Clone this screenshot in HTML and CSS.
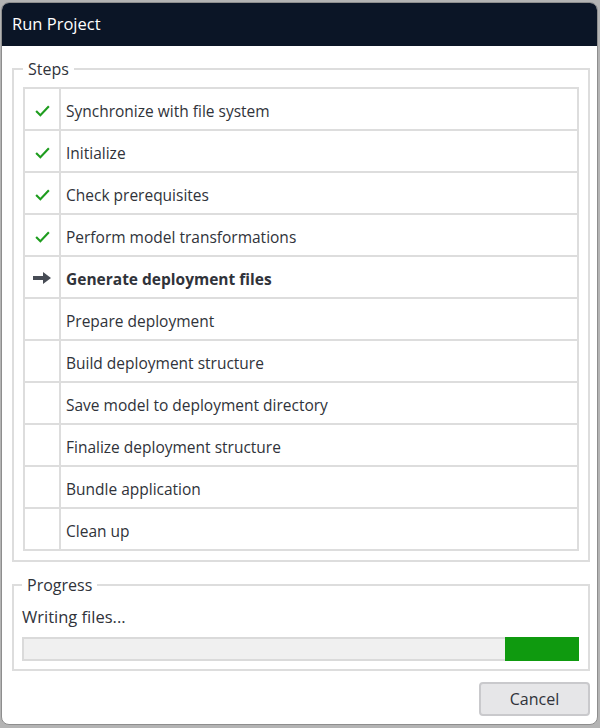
FILE: index.html
```html
<!DOCTYPE html>
<html>
<head>
<meta charset="utf-8">
<link rel="stylesheet" href="styles.css">
</head>
<body>
<div class="window">
  <div class="titlebar">Run Project</div>
  <div class="content">
    <fieldset class="group steps">
      <legend>Steps</legend>
      <table class="steps-table">
        <tr class="done"><td class="icon"><svg viewBox="0 0 16 16" width="17" height="17"><path d="M2 8.5 L6 12.5 L14 4" fill="none" stroke="#1f9d1f" stroke-width="2"/></svg></td><td>Synchronize with file system</td></tr>
        <tr class="done"><td class="icon"><svg viewBox="0 0 16 16" width="17" height="17"><path d="M2 8.5 L6 12.5 L14 4" fill="none" stroke="#1f9d1f" stroke-width="2"/></svg></td><td>Initialize</td></tr>
        <tr class="done"><td class="icon"><svg viewBox="0 0 16 16" width="17" height="17"><path d="M2 8.5 L6 12.5 L14 4" fill="none" stroke="#1f9d1f" stroke-width="2"/></svg></td><td>Check prerequisites</td></tr>
        <tr class="done"><td class="icon"><svg viewBox="0 0 16 16" width="17" height="17"><path d="M2 8.5 L6 12.5 L14 4" fill="none" stroke="#1f9d1f" stroke-width="2"/></svg></td><td>Perform model transformations</td></tr>
        <tr class="current"><td class="icon"><svg viewBox="0 0 20 16" width="20" height="16"><path d="M1 6 H11 V2 L19 8 L11 14 V10 H1 Z" fill="#474c55"/></svg></td><td>Generate deployment files</td></tr>
        <tr><td class="icon"></td><td>Prepare deployment</td></tr>
        <tr><td class="icon"></td><td>Build deployment structure</td></tr>
        <tr><td class="icon"></td><td>Save model to deployment directory</td></tr>
        <tr><td class="icon"></td><td>Finalize deployment structure</td></tr>
        <tr><td class="icon"></td><td>Bundle application</td></tr>
        <tr><td class="icon"></td><td>Clean up</td></tr>
      </table>
    </fieldset>
    <fieldset class="group progress">
      <legend>Progress</legend>
      <div class="status">Writing files...</div>
      <div class="bar"><div class="fill"></div></div>
    </fieldset>
    <div class="actions"><button class="btn">Cancel</button></div>
  </div>
</div>
</body>
</html>
```
FILE: styles.css
```css
html, body {
  margin: 0;
  padding: 0;
  background: #b4b4b4;
}
body {
  padding: 2px 2px 3px 1px;
  font-family: "Open Sans", "Noto Sans", sans-serif;
  font-size: 15.5px;
  color: #30333a;
}
.window {
  box-sizing: border-box;
  height: 723px;
  background: #ffffff;
  border: 1px solid #8e8e8e;
  border-radius: 8px;
  overflow: hidden;
  display: flex;
  flex-direction: column;
}
.titlebar {
  background: #0b1526;
  color: #ffffff;
  height: 43px;
  line-height: 42px;
  padding-left: 10px;
  font-size: 16.5px;
}
.content {
  flex: 1;
  display: flex;
  flex-direction: column;
  padding: 12px 7px 0 10px;
}
.group {
  margin: 0;
  border: 2px solid #dddddd;
  padding: 0 9px 9px 9px;
}
.group legend {
  padding: 0 5px;
  margin-left: 0;
  font-size: 16px;
  line-height: 22px;
}
.steps-table {
  width: 100%;
  border-collapse: collapse;
  margin-top: 7px;
}
.steps-table td {
  border: 2px solid #dddddd;
  height: 42px;
  padding: 3px 0 0 5px;
  font-size: 15.5px;
  box-sizing: border-box;
}
.steps-table td.icon {
  width: 36px;
  padding: 2px 0 0 0;
  text-align: center;
  vertical-align: middle;
}
.steps-table td.icon svg {
  display: block;
  margin: 0 auto;
}
.steps-table tr.current td {
  font-weight: bold;
}
.progress {
  margin-top: 12px;
  padding: 0 9px 8px 8px;
}
.status {
  font-size: 16.5px;
  line-height: 22px;
  margin-top: 10px;
}
.bar {
  margin-top: 9px;
  height: 24px;
  box-sizing: border-box;
  background: #f0f0f0;
  border: 2px solid #dadada;
  display: flex;
  justify-content: flex-end;
}
.fill {
  width: 74px;
  background: #0f9a0f;
  margin: -2px -2px -2px 0;
}
.actions {
  display: flex;
  justify-content: flex-end;
  margin-top: 11px;
}
.btn {
  width: 111px;
  height: 34px;
  background: #e6e6e8;
  border: 2px solid #c9c9cc;
  border-radius: 4px;
  font-family: inherit;
  font-size: 16px;
  color: #30333a;
  padding: 0;
}
```
